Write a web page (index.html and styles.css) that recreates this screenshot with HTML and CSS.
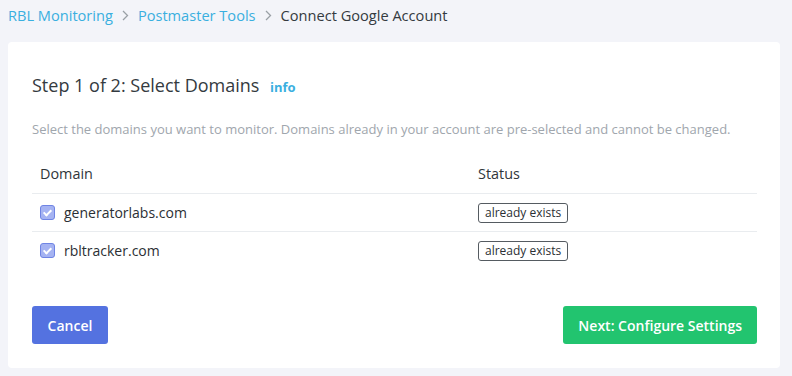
FILE: index.html
```html
<!DOCTYPE html>
<html lang="en">
<head>
    <meta charset="UTF-8">
    <title>Connect Google Account</title>
    <link rel="stylesheet" href="styles.css">
</head>
<body>
    <nav class="breadcrumb">
        <a href="#">RBL Monitoring</a>
        <svg class="sep" width="7" height="11" viewBox="0 0 7 11"><path d="M1 1l4.5 4.5L1 10" fill="none" stroke="#9aa0a6" stroke-width="1.3"/></svg>
        <a href="#">Postmaster Tools</a>
        <svg class="sep" width="7" height="11" viewBox="0 0 7 11"><path d="M1 1l4.5 4.5L1 10" fill="none" stroke="#9aa0a6" stroke-width="1.3"/></svg>
        <span class="current">Connect Google Account</span>
    </nav>

    <div class="card">
        <h2>Step 1 of 2: Select Domains <a href="#" class="info">info</a></h2>
        <p class="hint">Select the domains you want to monitor. Domains already in your account are pre-selected and cannot be changed.</p>

        <table class="domains">
            <thead>
                <tr>
                    <th>Domain</th>
                    <th class="status-col">Status</th>
                </tr>
            </thead>
            <tbody>
                <tr>
                    <td><label class="check"><span class="box"></span>generatorlabs.com</label></td>
                    <td class="status-col"><span class="badge">already exists</span></td>
                </tr>
                <tr>
                    <td><label class="check"><span class="box"></span>rbltracker.com</label></td>
                    <td class="status-col"><span class="badge">already exists</span></td>
                </tr>
            </tbody>
        </table>

        <div class="actions">
            <button class="btn btn-cancel">Cancel</button>
            <button class="btn btn-next">Next: Configure Settings</button>
        </div>
    </div>
</body>
</html>
```

FILE: styles.css
```css
:root {
    --page-bg: #f3f4f9;
    --link-blue: #3aafdf;
    --text-dark: #343a40;
    --text-muted: #a0a6ad;
    --line: #e9ecef;
}

* {
    margin: 0;
    padding: 0;
    box-sizing: border-box;
    font-family: "Open Sans", "Noto Sans", sans-serif;
}

body {
    background-color: var(--page-bg);
    padding: 3px 12px 8px 8px;
    color: var(--text-dark);
}

.breadcrumb {
    display: flex;
    align-items: center;
    gap: 8px;
    font-size: 14.6px;
    height: 24px;
    margin-bottom: 15px;
}

.breadcrumb a {
    color: var(--link-blue);
    text-decoration: none;
}

.breadcrumb .sep {
    margin: 1px 1px 0;
}

.breadcrumb .current {
    color: #343a40;
}

.card {
    background-color: #fff;
    border-radius: 4px;
    padding: 29px 23px 24px 24px;
}

h2 {
    font-size: 18px;
    font-weight: 400;
    color: #343a40;
    line-height: 28px;
}

.info {
    font-size: 13px;
    font-weight: 700;
    color: var(--link-blue);
    text-decoration: none;
    margin-left: 6px;
}

.hint {
    font-size: 13px;
    color: var(--text-muted);
    margin-top: 19px;
    line-height: 18px;
}

.domains {
    width: 100%;
    border-collapse: collapse;
    margin-top: 17px;
}

.domains th {
    text-align: left;
    font-size: 14.4px;
    font-weight: 400;
    color: #30353a;
    padding: 0 8px;
    height: 38px;
    border-bottom: 1px solid var(--line);
}

.domains td {
    font-size: 14px;
    font-weight: 500;
    color: #2b2f34;
    padding: 0 8px;
    height: 38px;
}

.domains tbody tr:first-child td {
    border-bottom: 1px solid var(--line);
}

.status-col {
    width: 287px;
}

.check {
    display: flex;
    align-items: center;
    gap: 9px;
}

.box {
    width: 15px;
    height: 15px;
    border-radius: 3px;
    background-color: #a5b3f2;
    border: 1px solid #6f84e4;
    position: relative;
}

.box::after {
    content: "";
    position: absolute;
    left: 4px;
    top: 2px;
    width: 3px;
    height: 6px;
    border: solid #fff;
    border-width: 0 2px 2px 0;
    transform: rotate(45deg);
}

.badge {
    display: inline-block;
    font-size: 12px;
    font-weight: 400;
    line-height: 18px;
    padding: 0 6px;
    border: 1px solid #555b61;
    border-radius: 3px;
}

.actions {
    display: flex;
    justify-content: space-between;
    margin-top: 37px;
}

.btn {
    border: none;
    border-radius: 3px;
    color: #fff;
    font-size: 14px;
    font-weight: 600;
    height: 38px;
    padding: 0 15px;
    cursor: pointer;
}

.btn-cancel {
    background-color: #5472e0;
    width: 76px;
}

.btn-next {
    background-color: #22c46f;
}
```
